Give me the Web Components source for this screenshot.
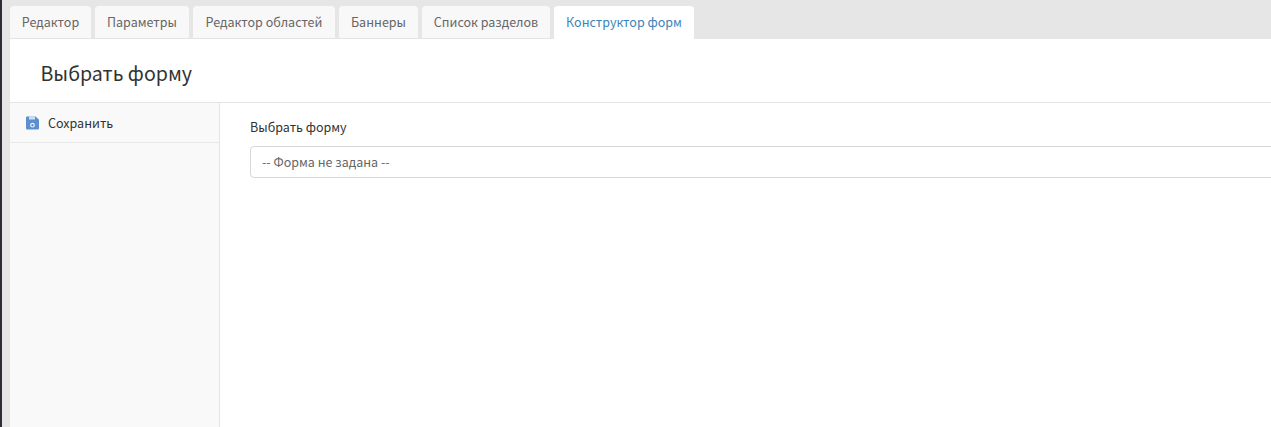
<!DOCTYPE html>
<html lang="ru"><head><meta charset="utf-8">
<style>
html,body{margin:0;padding:0;width:1271px;height:427px;overflow:hidden;background:#fff;font-family:"Noto Sans CJK SC","Open Sans",sans-serif}
</style></head><body>
<template id="t-shell"><style>
:host{display:flex;width:1271px;height:427px;overflow:hidden;background:#fff;color:#333;font-family:"Noto Sans CJK SC","Open Sans",sans-serif}
.strip{flex:0 0 2px;background:#2b2d3a;border-right:8px solid #e6e6e6}
.main{flex:1;min-width:0;display:flex;flex-direction:column}
.body{flex:1;display:flex;min-height:0}
</style><div class="strip"></div><div class="main"><slot name="tabs"></slot><slot name="header"></slot><div class="body"><slot name="side"></slot><slot name="content"></slot></div></div></template>

<template id="t-tabs"><style>
:host{display:flex;gap:4px;height:33px;padding-top:6px;background:#e6e6e6}
</style><slot></slot></template>

<template id="t-tab"><style>
:host{display:flex;align-items:center;justify-content:center;box-sizing:border-box;height:33px;background:#f8f8f8;color:#666;border-radius:4px 4px 0 0;border-bottom:1px solid #e4e4e4;font-size:12.5px;line-height:20px;white-space:nowrap;padding-bottom:1px}
:host([active]){background:#fff;color:#3b84b8;border-bottom-color:#fff}
</style><slot></slot></template>

<template id="t-header"><style>
:host{display:flex;align-items:center;box-sizing:border-box;height:64px;padding:4px 0 0 30.5px;border-bottom:1px solid #e5e5e5;font-size:19.6px;line-height:28px;color:#333;background:#fff}
</style><slot></slot></template>

<template id="t-side"><style>
:host{display:block;flex:0 0 210px;box-sizing:border-box;width:210px;background:#f9f9f9;border-right:1px solid #e5e5e5}
</style><slot></slot></template>

<template id="t-action"><style>
:host{display:flex;align-items:center;gap:9px;box-sizing:border-box;height:40px;padding:0 0 0 16px;border-bottom:1px solid #e8e8e8;font-size:12.5px;line-height:20px;color:#333}
svg{display:block;width:13px;height:14px;flex:none}
</style><svg viewBox="0 0 13 14"><path fill="#5b8fcf" d="M1.5 0.5H9.6L13 3.8V12.2a1.3 1.3 0 0 1-1.3 1.3H1.3A1.3 1.3 0 0 1 0 12.2V1.8A1.3 1.3 0 0 1 1.5.5Z"/><rect x="3" y="0.5" width="6" height="3" fill="#cfdff2"/><circle cx="6.5" cy="9.2" r="1.8" fill="none" stroke="#eef3fa" stroke-width="1.2"/></svg><slot></slot></template>

<template id="t-field"><style>
:host{display:block;flex:1;min-width:0;padding:14px 0 0 30px;overflow:hidden}
label{display:block;font-size:12.5px;line-height:20px;color:#333;margin-bottom:9px}
.box{box-sizing:border-box;width:1100px;height:32px;padding:0 11px;display:flex;align-items:center;border:1px solid #d7d7d7;border-radius:4px;background:#fff;color:#666;font-size:12.5px;line-height:20px;white-space:nowrap}
</style><label><slot name="label"></slot></label><div class="box"><slot name="value"></slot></div></template>

<x-shell>
<x-tabs slot="tabs">
<x-tab style="width:81px">Редактор</x-tab>
<x-tab style="width:94px">Параметры</x-tab>
<x-tab style="width:142px">Редактор областей</x-tab>
<x-tab style="width:79px">Баннеры</x-tab>
<x-tab style="width:128px">Список разделов</x-tab>
<x-tab style="width:140px" active>Конструктор форм</x-tab>
</x-tabs>
<x-header slot="header">Выбрать форму</x-header>
<x-side slot="side"><x-action>Сохранить</x-action></x-side>
<x-field slot="content"><span slot="label">Выбрать форму</span><span slot="value">-- Форма не задана --</span></x-field>
</x-shell>
<script>
for(const [n,t] of [['x-shell','t-shell'],['x-tabs','t-tabs'],['x-tab','t-tab'],['x-header','t-header'],['x-side','t-side'],['x-action','t-action'],['x-field','t-field']]){
customElements.define(n,class extends HTMLElement{constructor(){super();this.attachShadow({mode:'open'}).appendChild(document.getElementById(t).content.cloneNode(true));}});
}
</script>
</body></html>
